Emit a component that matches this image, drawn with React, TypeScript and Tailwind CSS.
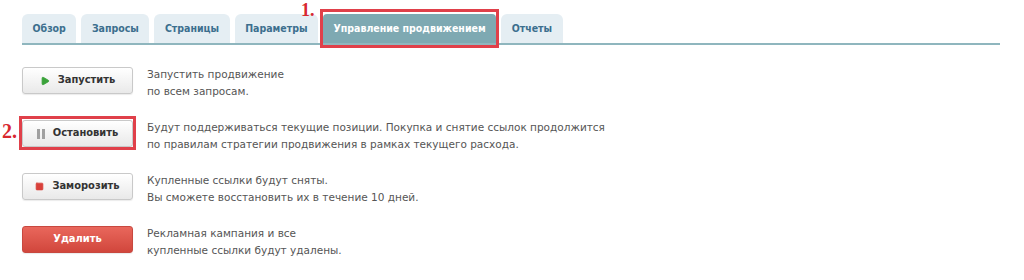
import { Play, Square } from 'lucide-react';

const tabs = ['Обзор', 'Запросы', 'Страницы', 'Параметры', 'Управление продвижением', 'Отчеты'];
const activeTab = 4;

interface ActionRowProps {
  label: string;
  lines: string[];
  icon?: React.ReactNode;
  danger?: boolean;
  marked?: boolean;
}

function PauseBars() {
  return (
    <svg width="8" height="10" viewBox="0 0 8 10">
      <rect x="0" y="0" width="3" height="10" fill="#a0a0a0" />
      <rect x="5" y="0" width="3" height="10" fill="#a0a0a0" />
    </svg>
  );
}

function ActionRow({ label, lines, icon, danger, marked }: ActionRowProps) {
  const btnClass = danger
    ? 'bg-gradient-to-b from-[#e9675c] to-[#d1463c] border-[#c8483f] text-white'
    : 'bg-gradient-to-b from-white to-[#e9e9e9] border-[#c9c9c9] text-[#333]';

  return (
    <div className="flex items-start gap-[14px] h-[53px]">
      <div className="relative w-[111px] shrink-0">
        <button
          className={`w-full h-[27px] rounded-[3px] border flex items-center justify-center gap-[8px] text-[11px] font-bold font-['DejaVu_Sans_Condensed','DejaVu_Sans',sans-serif] shadow-[0_1px_1px_rgba(0,0,0,0.08)] ${btnClass}`}
        >
          {icon}
          <span>{label}</span>
        </button>
        {marked && (
          <>
            <div className="absolute -left-[3px] -top-[4px] w-[117px] h-[34px] border-[3px] border-[#e0404a] pointer-events-none" />
            <span className="absolute -left-[20px] top-[1px] text-[20px] font-bold text-[#d8282f] font-['Liberation_Serif',serif] leading-none">
              2.
            </span>
          </>
        )}
      </div>
      <div className="text-[10.5px] leading-[17px] text-[#555] -mt-[1px]">
        {lines.map((l) => (
          <div key={l}>{l}</div>
        ))}
      </div>
    </div>
  );
}

export default function App() {
  return (
    <div className="w-[1024px] h-[280px] bg-white font-['DejaVu_Sans',Verdana,sans-serif] px-[22px] pt-[14px] overflow-hidden">
      {/* Tabs */}
      <div className="flex items-end gap-[5px] border-b-[2px] border-[#8fb6be] w-[978px] font-['DejaVu_Sans_Condensed','DejaVu_Sans',sans-serif]">
        {tabs.map((t, i) =>
          i === activeTab ? (
            <div key={t} className="relative">
              <span className="absolute -left-[22px] -top-[13px] text-[18px] font-bold text-[#d8282f] font-['Liberation_Serif',serif] leading-none">
                1.
              </span>
              <div className="px-[10.5px] h-[29px] flex items-center bg-[#7ea9b2] text-white text-[10.5px] font-bold rounded-t-[4px]">
                {t}
              </div>
              <div className="absolute -left-[3px] -top-[5px] -right-[3px] -bottom-[5px] border-[3px] border-[#e0404a] pointer-events-none" />
            </div>
          ) : (
            <div
              key={t}
              className="px-[10.5px] h-[29px] flex items-center bg-[#e5eef3] text-[#3c6f8e] text-[10.5px] font-bold rounded-t-[6px]"
            >
              {t}
            </div>
          )
        )}
      </div>

      {/* Actions */}
      <div className="pt-[22px]">
        <ActionRow
          label="Запустить"
          icon={<Play size={10} className="fill-[#3aa23a] text-[#3aa23a]" />}
          lines={['Запустить продвижение', 'по всем запросам.']}
        />
        <ActionRow label="Остановить" marked icon={<PauseBars />} lines={[
          'Будут поддерживаться текущие позиции. Покупка и снятие ссылок продолжится',
          'по правилам стратегии продвижения в рамках текущего расхода.',
        ]} />
        <ActionRow
          label="Заморозить"
          icon={<Square size={9} className="fill-[#d8403a] text-[#d8403a]" />}
          lines={['Купленные ссылки будут сняты.', 'Вы сможете восстановить их в течение 10 дней.']}
        />
        <ActionRow
          label="Удалить"
          danger
          lines={['Рекламная кампания и все', 'купленные ссылки будут удалены.']}
        />
      </div>
    </div>
  );
}
